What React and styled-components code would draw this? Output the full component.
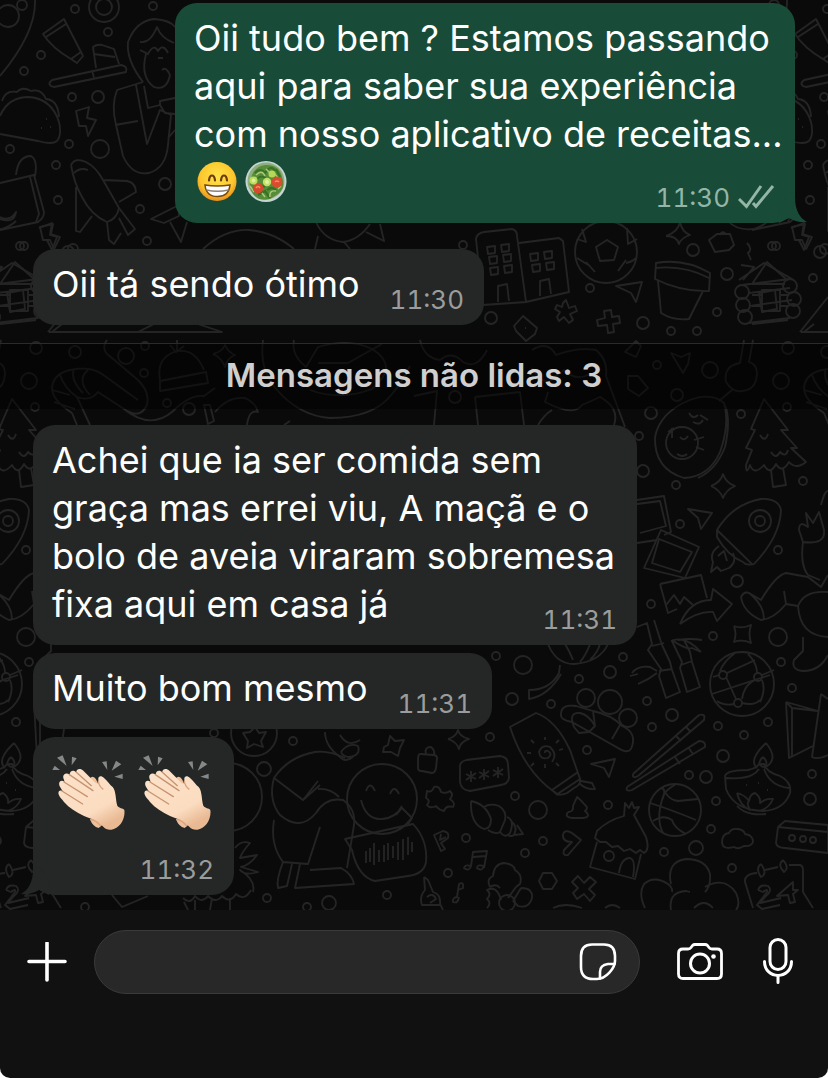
import React from "react"
import styled, { createGlobalStyle } from "styled-components"

const messages = [
  {
    id: 1,
    out: true,
    time: "11:30",
    text: "Oii tudo bem ? Estamos passando aqui para saber sua experiência com nosso aplicativo de receitas... ",
    reactions: true,
    tail: true,
  },
  { id: 2, time: "11:30", text: "Oii tá sendo ótimo" },
]

const unread = [
  {
    id: 3,
    time: "11:31",
    text: "Achei que ia ser comida sem graça mas errei viu, A maçã e o bolo de aveia viraram sobremesa fixa aqui em casa já",
  },
  { id: 4, time: "11:31", text: "Muito bom mesmo" },
  { id: 5, time: "11:32", claps: 2, tail: true },
]

// x, y, radius
const dots = [
  [75, 9, 4], [153, 6, 4], [108, 32, 4], [41, 55, 4], [24, 71, 4], [22, 5, 5], [72, 97, 4],
  [98, 97, 6], [69, 144, 4], [100, 149, 9], [10, 149, 4], [56, 165, 4], [165, 184, 6],
  [58, 200, 4], [140, 209, 4], [24, 246, 4], [147, 241, 4], [73, 249, 5], [104, 7, 8],
  [104, 7, 15], [8, 16, 11], [693, 250, 6], [772, 246, 4], [820, 252, 6], [727, 274, 6],
  [813, 278, 4], [590, 288, 4], [643, 323, 6], [491, 318, 6], [717, 312, 4], [671, 331, 4],
  [697, 331, 4], [463, 245, 4], [36, 348, 6], [75, 352, 6], [126, 356, 8], [145, 346, 4],
  [144, 373, 4], [29, 381, 8], [167, 403, 4], [189, 409, 6], [657, 365, 4], [710, 370, 8],
  [677, 395, 6], [651, 413, 6], [639, 436, 4], [643, 471, 6], [741, 414, 4], [787, 407, 4],
  [676, 485, 4], [803, 481, 4], [680, 524, 4], [760, 521, 5], [760, 521, 11], [778, 550, 4],
  [737, 581, 6], [651, 604, 4], [713, 636, 4], [778, 637, 9], [455, 397, 6], [496, 656, 4],
  [623, 657, 4], [523, 665, 9], [610, 672, 6], [579, 679, 4], [512, 699, 6], [551, 704, 4],
  [647, 701, 4], [672, 715, 6], [652, 727, 4], [490, 737, 4], [718, 726, 4], [744, 735, 4],
  [723, 756, 6], [587, 750, 4], [515, 796, 4], [538, 810, 9], [689, 775, 4], [706, 777, 6],
  [608, 805, 4], [716, 801, 4], [810, 799, 6], [812, 774, 4], [792, 688, 4], [781, 662, 4],
  [768, 722, 4], [586, 698, 9], [610, 702, 12], [628, 718, 9], [711, 829, 4], [696, 848, 7],
  [664, 852, 4], [732, 868, 4], [466, 838, 4], [543, 841, 4], [525, 853, 4], [448, 873, 4],
  [264, 769, 7], [293, 741, 4], [214, 733, 4], [267, 898, 4], [329, 903, 7], [387, 895, 4],
  [307, 907, 4], [85, 907, 4], [254, 733, 23], [382, 799, 35], [742, 684, 32], [675, 810, 26],
  [606, 252, 31], [609, 856, 5], [792, 838, 3], [803, 839, 3], [813, 840, 3], [682, 443, 16],
  [742, 292, 7], [743, 305, 7], [745, 317, 7], [790, 286, 7], [794, 299, 7], [793, 311, 7],
  [723, 675, 4], [758, 677, 4], [738, 703, 4], [228, 797, 34], [507, 903, 8],
]

const strokes = [
  // map pin, squeezed tube, cake on a tray
  "M35 0C36 26 20 52 0 76",
  "M43 34L64 19L81 52L71 59Q52 48 43 34ZM46 37L66 24M71 59L77 63L83 56L81 52",
  "M52 80L121 65Q128 66 126 72L54 87Q46 85 52 80M96 68L93 47Q97 44 102 45L114 49L119 64M94 54L115 57M92 70L94 78",
  // taco
  "M0 116Q8 97 29 97Q52 99 59 122Q62 135 57 141Q52 145 38 141L0 134M2 101Q5 90 17 92Q22 86 31 91Q41 88 46 99Q58 100 59 117M46 119h1M41 128h1M50 127h1",
  // lightning
  "M76 111L89 107L87 118L96 120L88 136L86 126L79 126ZM40 227L53 224L51 234L60 237L54 249L50 240L43 240Z",
  // reading person
  "M143 82Q126 60 128 42Q136 21 154 19Q170 20 175 27M140 42Q150 44 157 27Q161 38 174 43M140 50L148 54Q154 43 158 51Q163 43 168 53M146 54Q140 77 154 87Q167 91 170 75Q166 66 162 70M158 58h5M143 82L117 90Q111 105 116 125L123 156Q132 176 149 173Q166 168 168 145L171 115L160 110L147 144L136 85M115 125L138 121M144 86L148 108L160 105L165 113L175 114M160 105V101L175 98M168 138L175 130",
  // bag
  "M0 183L34 175L44 212Q44 218 38 222L0 230M30 177L39 214L36 222M16 175Q18 156 31 156Q38 160 35 176M0 219Q14 224 16 212Q10 222 0 217",
  // plane
  "M71 165Q75 157 86 162Q96 167 103 180L119 208Q117 219 107 222Q91 215 82 197Q74 183 71 165M74 173Q80 167 88 170M103 180L127 181Q136 183 136 192L119 202M76 187L76 231L80 232L92 216M107 222L109 240L114 244L121 233M119 218L128 235L135 229L119 208",
  // bow and hill
  "M151 219L179 205V216L164 223ZM170 222L181 242L187 222M203 249Q225 229 249 230Q274 232 294 249M52 332H222L198 324M52 332L62 324M138 332L154 324",
  // cabin left
  "M0 284L15 262L34 279M0 284H33M10 290H28V311H10ZM0 295H10M0 306H10M28 295H36M28 306H36M0 324L36 320",
  // buildings
  "M483 305L476 239Q477 233 484 232L512 229Q517 230 517 236L526 302L483 305M519 243L559 238L563 241L569 292L526 302M487 247l8-1v7l-7 1zM501 245l8-1v7l-7 1zM489 257l8-1v7l-7 1zM503 255l8-1v7l-7 1zM490 268l8-1v7l-7 1zM504 266l8-1v7l-7 1zM530 254l8-1v7l-7 1zM544 252l8-1v7l-7 1zM532 265l8-1v7l-7 1zM546 263l8-1v7l-7 1zM498 302V286L507 284L509 301M540 296V281L549 279L551 294",
  // football
  "M596 247L607 240L618 247L614 260L600 261ZM577 239L586 242L582 229M637 239L628 244L627 228M586 262L595 272M626 260L618 271M577 258L590 266M636 258Q632 262 626 263",
  // sun
  "M728 221Q737 231 754 229Q763 226 768 221M316 222Q324 240 343 242Q359 240 370 224M318 236L315 249M344 242L350 249M366 232L384 241L380 224",
  // stars
  "M666 236Q678 232 680 222Q682 232 690 235Q681 238 679 244Q677 236 666 236M711 486Q721 482 723 474Q726 483 735 486Q726 490 723 498Q720 490 711 486M448 739Q456 737 458 730Q460 737 469 739Q460 742 459 749Q457 742 448 739M213 354Q222 352 225 345Q228 352 235 355Q227 358 225 367Q222 358 213 354M734 626Q742 629 751 625Q748 634 751 643Q742 639 734 642Q737 634 734 626",
  // flower pot
  "M656 263Q684 258 710 273L709 291Q681 292 655 279ZM656 268Q684 265 709 278M658 281L661 313Q674 321 689 319L703 291",
  // paper planes
  "M616 286L642 282L636 302L631 293ZM688 509L712 513L701 529L698 518ZM591 764L615 759L609 777L604 768Z",
  // cube, asterisk, plus, diamond
  "M709 240L717 234L730 234L734 245L729 250L715 252ZM720 235Q722 230 726 234M514 326L523 316L537 328L535 334L526 341L516 331ZM525 328h1",
  "M563 303L566 300L569 308L575 306L577 311L570 314L573 320L569 323L564 317L559 321L557 317L560 312L555 309L557 305L562 307ZM604 311L611 310L612 317L619 316L620 323L613 324L614 332L608 333L607 325L598 326L597 320L605 318Z",
  // log cabin right
  "M739 280L764 263L792 279M741 265L754 267L743 280M742 285L790 279M749 293L790 288M749 306L792 300M748 323L790 318M759 293L775 290L777 309L762 312ZM747 243Q753 249 748 253L751 260",
  "M800 332L828 297M801 332H828M791 228L804 223L802 235L809 237L804 250L799 240",
  // prawn
  "M72 413Q52 400 52 388Q53 374 70 370Q90 366 102 374L138 400M60 375Q65 389 77 397M74 369Q70 380 83 393M88 370Q76 380 90 395M52 390L70 395M54 402L75 409M72 413L77 425M77 397L90 425M77 397Q90 402 98 392L124 409Q140 420 147 405Q150 392 138 380L106 353Q102 346 107 340M124 409Q150 430 172 412Q190 394 204 396L215 388",
  // beanie
  "M160 381V391L208 383L206 372ZM160 380Q156 359 174 352Q194 346 204 370M170 345L176 352L184 346M177 340V352",
  // swirled plate, banana
  "M263 340Q259 370 277 390Q300 416 330 418Q374 418 392 394Q402 382 410 366M294 340Q291 355 306 367L318 347Q350 338 372 349Q400 366 372 389Q340 401 310 390M318 363H348L382 344M204 405L210 405L214 421L208 424ZM215 412Q228 396 245 398Q256 403 258 412Q249 409 247 425M284 425L290 421",
  // people, letter and leaf around the divider
  "M420 340Q424 358 440 360Q452 350 463 362Q477 370 487 350M475 397L520 392L524 425M475 397L478 425M414 396L437 391L434 425M532 350Q548 340 556 355Q578 347 596 350Q608 360 606 376L625 427M548 392L545 402Q574 417 582 405L600 397Q620 408 614 425M538 425Q544 415 552 410M532 368Q538 380 548 382L564 370Q576 382 590 374",
  "M628 376L638 376L648 388L639 396L628 389ZM671 353L681 357L690 353L688 364L683 373L677 363ZM744 340L740 363Q723 366 726 382Q733 393 742 391Q756 390 757 374Q757 364 749 362L753 340M732 390L719 401M636 341L641 346L636 357L625 352Z",
  // avocado
  "M655 437Q660 412 690 400Q712 392 724 403Q730 424 720 452Q709 477 684 478Q654 469 655 437M725 405Q731 420 725 447Q716 470 698 478M689 413Q693 420 698 415M693 422Q700 426 703 420M708 420L700 415M668 432L674 428M672 428V438M694 440L704 437M696 447L704 450M680 437Q684 442 688 436M677 454Q683 458 687 454",
  // pine tree
  "M764 399L788 430L781 430L797 448L791 448L806 462Q796 470 789 462Q782 474 776 464Q770 476 764 465Q754 476 750 465Q746 476 746 465L752 450L746 448L755 430L751 429ZM771 470L773 487L786 485L783 468M760 435Q765 443 768 434M771 452Q776 460 780 452Q786 458 788 450",
  // photos and picture
  "M637 500L664 496L671 532L664 535M637 504L660 501L666 526L640 533M637 543L657 540M661 530L699 547L685 578L644 568ZM659 539L692 552L680 572L652 563ZM660 584L701 575L707 598M660 584L668 613L677 609M666 605L674 595L680 604L684 597L693 605",
  // arrow
  "M680 624Q690 600 711 600L713 589L732 604L717 621L713 612Q698 611 680 624",
  // rocket
  "M717 530Q733 504 761 499Q778 498 781 510Q780 537 754 564Q746 566 743 562Q728 556 717 537ZM717 530L753 565M719 546Q709 553 713 562L711 572L717 567L721 571L729 568Q737 562 733 553M718 556L724 551L727 561",
  // santa and hat
  "M741 597Q744 591 749 593L761 600Q776 575 786 573L808 577L821 587L828 575M741 597Q743 612 761 620Q774 619 786 604L784 591M749 593Q764 605 764 619M786 604L798 606Q804 590 828 592M798 606Q800 636 828 637M803 637V651L794 660Q791 670 803 671Q820 671 828 655",
  "M799 530Q799 520 808 527L806 513L813 523L819 512L824 530Q826 545 803 542ZM803 542Q800 565 808 575L820 580M821 505Q825 490 828 491",
  // umbrella, bamboo
  "M548 644Q556 664 574 664Q600 662 608 644M565 644Q570 652 573 660M590 644Q586 655 580 662M600 644Q598 652 590 660M560 665L559 673Q550 690 529 690V699Q548 696 561 674",
  "M637 627L647 623L652 644L648 650L661 669L659 676L666 698L680 692L672 670L670 662L662 645L654 620M652 646L664 643M659 671L672 669M672 641L682 662L680 668L687 692L700 687L692 662L690 652L684 640M681 665L692 661M671 641Q685 635 701 652M672 640Q686 650 692 648L701 652M678 640Q690 638 702 640M632 673Q638 665 650 667L657 671M638 684Q648 680 657 673M638 674L630 676",
  // ball seams
  "M720 671Q724 661 735 653M727 673L755 660M726 677L736 699M757 673Q757 663 748 654M755 680Q744 685 742 699M713 677L719 675M762 675L774 670M712 694L770 675M742 703Q755 706 760 700M717 701Q724 706 734 704M762 680Q766 690 760 702",
  "M650 803Q672 810 696 820M663 788Q668 800 678 801L698 799M661 788Q667 789 662 800Q656 820 663 833M675 785Q664 790 662 800M653 821Q664 814 672 820Q674 828 686 834",
  // gloves
  "M561 714Q561 704 576 706L593 711Q612 715 622 726Q638 733 631 749Q627 754 618 748L572 722Q560 720 561 714M574 727Q568 712 580 713Q589 715 595 726L589 732L579 733ZM593 711L595 726M620 725L612 739",
  // sun cream bottle
  "M510 727L536 713Q556 720 570 750L579 776Q583 784 574 788L567 793Q559 797 553 791Q524 770 510 727ZM552 790L578 772M556 795L580 779M581 781L592 783L595 789Q587 790 580 784M545 753q-1-3 3-2q5 3 0 7q-8 2-9-6q3-8 11-5q8 7 2 15M545 740v-3M556 743l3-3M559 750l4-1M556 763l3 3M545 764v4M534 763l-3 3M531 753h-4M534 743l-3-3",
  // chopsticks
  "M633 774L699 715Q706 713 704 720L638 776Q632 779 633 774M686 727L691 732M676 736L681 741M627 787L699 741Q706 741 705 747L632 790Q625 792 627 787M688 747L693 754M675 757L680 764",
  // folded map
  "M786 702L818 711M786 702L789 758L813 746M786 702L792 708L792 757M821 694L812 757Q818 760 828 755M821 694L828 699M818 711L792 708",
  // diya lamp
  "M725 776Q727 770 748 770Q757 768 759 764H764Q766 772 780 776Q792 782 790 793Q784 810 763 811Q734 810 726 789ZM726 778Q752 780 759 769M764 769Q770 786 789 788M766 743Q748 760 757 768M766 743Q780 760 764 768M763 757Q756 764 763 767Q770 764 763 757M737 793Q745 795 749 801Q750 794 755 793Q761 797 760 803Q766 798 773 799Q769 808 760 811M737 793Q740 806 750 810Q746 803 749 801M737 806Q746 816 766 814M746 785h1M758 783h1M767 790h1",
  // lock, password, gear
  "M421 754Q418 753 418 760V768Q418 771 422 771L432 773Q435 773 436 768L437 758Q437 755 433 755ZM426 754Q424 747 431 747Q435 750 434 755",
  "M466 760L500 756Q508 757 508 764L509 778Q508 784 501 785L470 791Q461 790 460 782V768Q459 762 466 760M471 771V782M466 774L476 779M476 773L466 780M484 769V780M479 772L489 777M489 771L479 778M498 767V778M493 770L503 775M503 769L493 776",
  "M427 791Q432 793 434 787Q439 785 441 792Q446 794 450 791Q454 795 450 799Q456 803 453 807Q446 805 444 811Q439 810 436 806Q430 809 427 805Q431 800 426 798Z",
  // shell
  "M471 801Q486 804 491 819Q491 829 484 829Q470 824 471 801M484 807Q490 803 499 806Q507 811 505 820L500 832Q495 835 488 830M507 817Q515 820 510 833Q505 839 500 832M512 822Q518 827 514 835Q511 837 508 835M517 825L523 834L514 835",
  // cream, notes, whistles
  "M568 812Q574 812 573 806L577 797Q581 800 585 805Q589 808 585 811Q592 817 583 818H572Q564 817 568 812M434 835L443 831Q450 832 448 838L441 843L445 849L441 851ZM441 834L440 840L446 837M563 834Q565 829 572 833L581 840L568 855Q562 856 564 850L572 842Q562 842 563 834",
  "M471 866L473 852L487 851L484 868M473 857L486 856M471 866Q465 864 464 868Q469 872 471 866M484 866Q477 864 477 868Q482 872 484 866M459 884L457 897Q452 898 453 902Q458 904 459 897M459 884Q464 881 463 888L458 890",
  // hut
  "M595 838L597 831Q608 820 624 816L625 803L629 808L632 802L634 808L639 807L634 815L646 837Q650 850 644 853L640 850L636 853L630 849L624 851L618 846L612 847L606 842L600 842ZM597 842L590 867L635 879L641 854M619 873Q621 858 630 858Q636 860 633 877",
  // cloud, box
  "M722 842Q722 834 729 833Q731 828 738 829Q744 830 745 834Q753 835 753 842Q751 847 744 846Q738 850 734 847Q722 850 722 842M778 827L785 821L828 825M778 827L828 832M778 827L776 843Q777 848 785 848L828 853V825",
  // flowers at the bottom
  "M645 908Q638 894 644 884Q654 875 668 884Q673 888 672 892M671 884Q666 862 686 859Q706 859 710 874Q711 886 705 892M705 887Q725 876 736 893Q741 904 736 910M671 910Q668 892 686 891L690 892M694 908Q704 898 713 908",
  "M490 887Q486 879 493 876Q494 864 504 863Q514 864 515 870Q523 875 520 884L516 887M516 887L508 898M521 888L513 901M521 888Q533 888 532 898Q529 909 518 906L513 901M501 900Q497 885 487 890Q492 894 487 899Q492 903 487 908M490 887Q496 883 500 888",
  // hexagon, cross
  "M539 881L543 873L552 873L557 881L552 889L543 889ZM572 882L578 876L584 883L590 877L596 882L589 889L595 895L590 901L584 894L577 899L573 893L578 888Z",
  // calendar
  "M753 908L745 882Q744 874 757 873M765 870L778 867M789 865H799Q803 865 803 870V892L813 908M761 864Q755 868 761 877Q768 874 761 864M783 860Q777 865 784 872Q790 868 783 860M758 890Q760 884 768 886Q773 890 766 896L760 903L781 898M758 890L763 892Q768 888 767 892L757 905L762 909L780 905M793 882L777 896L788 895L790 903L795 902L793 894L798 890H793Z",
  "M424 877L428 880L433 892Q441 894 440 904L443 910M424 877L425 890Q419 897 422 905H440M427 897Q433 892 436 899L430 903M553 908Q565 902 582 908M605 908Q612 902 620 908",
  // hugging person
  "M274 778Q288 757 315 752Q328 750 345 758M274 778L303 800L320 785M303 800L318 781M274 778Q268 800 280 815Q300 832 316 813Q326 797 343 800Q356 809 354 825L347 868M318 789Q330 788 339 797M274 820Q270 845 283 862L308 864L320 827M283 862Q276 880 278 888L287 886L292 864M300 864L295 888L354 884Q352 874 341 868L310 870",
  "M325 732Q325 746 340 757Q345 763 353 757M340 735Q348 748 360 740M341 752Q348 742 358 746Q361 755 350 757Q343 757 341 752M384 747L388 745L390 736L395 741L404 740L400 748L398 756L391 752L383 752Z",
  // smiley and speech bubble
  "M366 791Q370 780 375 791M390 794Q394 784 399 794M361 800Q366 820 382 819Q396 818 402 806M345 839L413 824Q428 840 426 862Q424 874 408 876L375 881Q358 877 352 850ZM366 851V863M370 848V862M374 843V865M379 850V862M384 845V862M388 843V860M393 846V858M398 842V860M403 839V860M408 837V855M412 842V852M396 815L402 808L412 818L408 824",
  // medal star, palm
  "M243 733L250 732L255 727L259 733L266 732L261 741L263 747L254 744L247 748L248 741Z",
  "M235 848Q241 840 250 843Q242 852 240 858L257 855Q250 865 241 867L258 872Q245 876 240 870Q256 880 253 892M183 898Q190 905 195 896Q202 904 208 896Q216 904 222 896Q230 904 236 894Q244 902 251 890M195 900V910M212 898L210 910M230 898V910M184 902L188 910M112 895L122 907L148 896",
]

export default function App() {
  return (
    <Page>
      <GlobalStyle />
      <Chat>
        <Wallpaper />
        <Thread>
          {messages.map((msg) => (
            <Message key={msg.id} msg={msg} />
          ))}
        </Thread>
        <Unread>Mensagens não lidas: 3</Unread>
        <Thread $tight>
          {unread.map((msg) => (
            <Message key={msg.id} msg={msg} />
          ))}
        </Thread>
      </Chat>
      <Composer>
        <IconButton type="button" aria-label="Anexar">
          <svg width="40" height="40" viewBox="0 0 40 40">
            <path d="M20 1V38M2 19.500H38" strokeWidth="3.600" />
          </svg>
        </IconButton>
        <Field>
          <Input type="text" aria-label="Mensagem" />
          <IconButton type="button" aria-label="Figurinhas">
            <svg width="38" height="38" viewBox="0 0 38 38">
              <path d="M13 1.500H25Q36 1.500 36 13V18C36 25 27 36 18 36H14Q2 36 2 24V13Q2 1.500 13 1.500Z" strokeWidth="2.600" />
              <path d="M35.500 21H29Q21 22 21 29V35.500" strokeWidth="2.600" />
            </svg>
          </IconButton>
        </Field>
        <Actions>
          <IconButton type="button" aria-label="Câmera">
            <svg width="46" height="38" viewBox="0 0 46 38">
              <path d="M6 6H11Q13 6 14 4.500L15.500 2.500Q16.500 1.500 18 1.500H28Q29.500 1.500 30.500 2.500L32 4.500Q33 6 35 6H40Q44.500 6 44.500 10.500V31Q44.500 35.500 40 35.500H6Q1.500 35.500 1.500 31V10.500Q1.500 6 6 6Z" strokeWidth="2.800" />
              <circle cx="23" cy="20.500" r="9.500" strokeWidth="3" />
              <circle cx="36.500" cy="13.500" r="2.300" fill="#fff" stroke="none" />
            </svg>
          </IconButton>
          <IconButton type="button" aria-label="Gravar áudio">
            <svg width="32" height="48" viewBox="0 0 32 48">
              <rect x="8" y="1.5" width="16" height="30" rx="8" strokeWidth="3" />
              <path d="M2.500 23.500C2.500 42 29.500 42 29.500 23.500M16 37.500V44.500" strokeWidth="3" />
            </svg>
          </IconButton>
        </Actions>
      </Composer>
    </Page>
  )
}

function Message({ msg }) {
  return (
    <Bubble $out={msg.out}>
      {msg.text}
      {msg.reactions && (
        <Emojis>
          <Grin />
          <Salad />
        </Emojis>
      )}
      {msg.claps && (
        <Claps>
          {Array.from({ length: msg.claps }, (_, i) => (
            <Clap key={i} />
          ))}
        </Claps>
      )}
      <Meta $out={msg.out}>
        <time>{msg.time}</time>
        {msg.out && (
          <svg width="37" height="26" viewBox="0 0 37 26" role="img" aria-label="Entregue">
            <path d="M1 14L8.500 21.500L23 1M15 18L18 21.500L35 1" fill="none" stroke="#93b6a7" strokeWidth="3" />
          </svg>
        )}
      </Meta>
      {msg.tail && (
        <Tail $out={msg.out} width="32" height="32" viewBox="0 0 32 32">
          <path d="M20 0V6C20 20 25 27 32 31Q22 32 14 27L4 32Q0 24 8 10Z" />
        </Tail>
      )}
    </Bubble>
  )
}

function Wallpaper() {
  return (
    <Backdrop aria-hidden="true">
      <defs>
        <g id="doodles" fill="none" stroke="#242424" strokeWidth="1.8" strokeLinejoin="round">
          {dots.map(([x, y, r], i) => (
            <circle key={i} cx={x} cy={y} r={r} />
          ))}
          {strokes.map((d, i) => (
            <path key={i} d={d} />
          ))}
        </g>
        <pattern id="wallpaper" width="752" height="910" patternUnits="userSpaceOnUse">
          <use href="#doodles" />
          <use href="#doodles" x="-752" />
        </pattern>
      </defs>
      <rect width="100%" height="100%" fill="url(#wallpaper)" />
    </Backdrop>
  )
}

function Grin() {
  return (
    <svg width="40" height="40" viewBox="0 0 40 40" role="img" aria-label="😁">
      <defs>
        <radialGradient id="face" cx="50%" cy="38%" r="62%">
          <stop offset="0" stopColor="#ffe44a" />
          <stop offset="0.7" stopColor="#fcc62c" />
          <stop offset="1" stopColor="#ea8f1c" />
        </radialGradient>
      </defs>
      <circle cx="20" cy="19.5" r="19.5" fill="url(#face)" />
      <path d="M12 18.500Q12.500 13.500 15 13.500Q17.500 13.500 18 18.500M24 18.500Q24.500 13.500 27 13.500Q29.500 13.500 30 18.500" fill="none" stroke="#6b3d0c" strokeWidth="2.2" strokeLinecap="round" />
      <path d="M8 23Q20 25 33 23Q32 34.500 20.500 34.500Q9 34.500 8 23Z" fill="#fff" stroke="#7b4a12" strokeWidth="1.5" />
      <path d="M9.500 28Q20 30.500 31.500 28" fill="none" stroke="#8d8375" strokeWidth="1.3" />
    </svg>
  )
}

function Salad() {
  return (
    <svg width="42" height="42" viewBox="0 0 42 42" role="img" aria-label="🥗">
      <circle cx="21" cy="20.5" r="20.5" fill="#c4d5d2" />
      <circle cx="21" cy="20" r="18.5" fill="#8fae80" />
      <path d="M7 14Q11 5 20 4Q34 3 37 16Q41 27 33 33L25 38Q14 41 8 33Q2 24 7 14Z" fill="#568d38" />
      <path d="M10 12Q15 6 20 12Q26 3 30 10M12 18Q17 13 21 18M22 29Q27 25 31 29M13 34L20 30L25 37M31 8L35 16M15 24L20 26" fill="none" stroke="#3a7224" strokeWidth="2.2" />
      <path d="M11 14Q17 8 20 15M25 36Q24 29 31 30M29 12L34 18M17 32L20 36M21 8L25 12M5 25L9 31M33 28L36 25" fill="none" stroke="#a9c87c" strokeWidth="1.5" />
      <circle cx="13" cy="27" r="5.2" fill="#d6492e" />
      <circle cx="32" cy="21" r="5.5" fill="#da4b2f" />
      <path d="M11 27Q13 24 15 27M30 21Q32 19 34 21" fill="none" stroke="#f28f60" strokeWidth="1.6" />
      <circle cx="8.5" cy="19.5" r="4" fill="#b9dc5c" />
      <circle cx="27" cy="13" r="3.5" fill="#b5d957" />
      <circle cx="22" cy="21" r="4.2" fill="#c1e168" />
      <circle cx="22" cy="21" r="2" fill="#e3efa5" />
      <circle cx="8.5" cy="19.5" r="2" fill="#dcec9c" />
    </svg>
  )
}

function Clap() {
  return (
    <svg width="74" height="76" viewBox="98 44 222 228" role="img" aria-label="👏🏻">
      <defs>
        <linearGradient id="skin" x1="0" y1="0" x2="0.6" y2="1">
          <stop offset="0" stopColor="#fbe3cb" />
          <stop offset="0.75" stopColor="#fbdcc0" />
          <stop offset="1" stopColor="#e9b993" />
        </linearGradient>
      </defs>
      <path d="M99 92L106 79L122 92ZM113 55L130 48L142 80ZM158 52L172 57L157 78ZM248 68L262 66L264 92ZM290 64L306 75L277 94ZM285 112L310 103L310 119Z" fill="#858888" />
      <path d="M210 118Q222 106 230 120L250 160L225 165ZM212 240Q220 262 238 266L248 258L240 240Z" fill="#eebf9c" />
      <path d="M119 168C113 154 124 150 130 156L121 141C115 126 127 120 136 128L132 116C129 103 142 98 151 106C151 93 164 91 171 99C170 88 184 86 192 94L228 130L237 134V120C236 108 247 108 254 116C264 124 272 138 280 143C291 156 288 180 294 199C300 208 310 205 315 212C319 240 300 268 276 271C256 273 250 260 236 246C220 238 206 236 194 230C170 218 150 206 134 188C128 180 122 175 119 168Z" fill="url(#skin)" />
      <path d="M128 155L190 194M134 128L204 172M150 106L221 154M171 99L216 139" fill="none" stroke="#c89370" strokeWidth="4" strokeLinecap="round" />
      <path d="M237 124Q238 140 252 150M212 241Q228 240 244 260" fill="none" stroke="#dba37c" strokeWidth="4" />
    </svg>
  )
}

const GlobalStyle = createGlobalStyle`
  * {
    box-sizing: border-box;
  }
  body {
    margin: 0;
    background: #fff;
    font-family: Inter, "Liberation Sans", sans-serif;
  }
`

const Page = styled.main`
  display: flex;
  flex-direction: column;
  min-height: 100vh;
  overflow: hidden;
  border-radius: 0 0 10px 10px;
  background: #111;
`

const Chat = styled.section`
  position: relative;
  flex: 1;
  background: #0a0a0a;
`

const Backdrop = styled.svg`
  position: absolute;
  inset: 0;
  width: 100%;
  height: 100%;
`

const Thread = styled.div`
  position: relative;
  display: flex;
  flex-direction: column;
  align-items: flex-start;
  gap: ${({ $tight }) => ($tight ? "8px" : "26px")};
  padding: ${({ $tight }) => ($tight ? "16px 33px 15px" : "3px 33px 18px")};
`

const Bubble = styled.article`
  position: relative;
  display: flow-root;
  align-self: ${({ $out }) => ($out ? "flex-end" : "flex-start")};
  max-width: calc(100% - ${({ $out }) => ($out ? "142px" : "158px")});
  padding: 11px 11px 9px 19px;
  border-radius: 22px;
  background: ${({ $out }) => ($out ? "#184c38" : "#242726")};
  color: #fff;
  font-size: 36px;
  line-height: 48px;
`

const Meta = styled.span`
  float: right;
  display: flex;
  align-items: center;
  gap: 8px;
  height: 32px;
  margin: 24px 9px 0 30px;
  color: ${({ $out }) => ($out ? "#93b6a7" : "#9b9d9c")};
  font-size: 26px;
  line-height: 32px;
  font-variant-numeric: tabular-nums;
`

const Tail = styled.svg`
  position: absolute;
  bottom: 0;
  ${({ $out }) => ($out ? "right: -12px;" : "left: -12px; transform: scaleX(-1);")}
  fill: ${({ $out }) => ($out ? "#184c38" : "#242726")};
`

const Emojis = styled.span`
  display: inline-flex;
  align-items: center;
  gap: 8px;
  height: 48px;
  margin-left: 3px;
  vertical-align: top;
`

const Claps = styled.div`
  display: flex;
  gap: 12px;
  padding: 6px 11px 0 0;
`

const Unread = styled.h2`
  position: relative;
  height: 66px;
  margin: 0;
  border-top: 1px solid #2b2b2b;
  background: rgba(0, 0, 0, 0.5);
  color: #cfcfcf;
  font-size: 33px;
  font-weight: 600;
  line-height: 62px;
  text-align: center;
`

const Composer = styled.footer`
  display: flex;
  align-items: center;
  gap: 27px;
  padding: 20px 34px 84px 27px;
`

const Field = styled.div`
  display: flex;
  flex: 1;
  align-items: center;
  min-width: 0;
  height: 64px;
  padding: 0 22px 0 28px;
  border: 1px solid #3a3a3a;
  border-radius: 32px;
  background: #282828;
`

const Input = styled.input`
  flex: 1;
  width: 100%;
  min-width: 0;
  padding: 0;
  border: none;
  outline: none;
  background: transparent;
  color: #fff;
  font: inherit;
  font-size: 36px;
`

const Actions = styled.div`
  display: flex;
  align-items: center;
  gap: 39px;
  margin-left: 10px;
`

const IconButton = styled.button`
  display: flex;
  padding: 0;
  border: none;
  background: transparent;
  cursor: pointer;
  svg {
    fill: none;
    stroke: #fff;
    stroke-linecap: round;
    stroke-linejoin: round;
  }
`
